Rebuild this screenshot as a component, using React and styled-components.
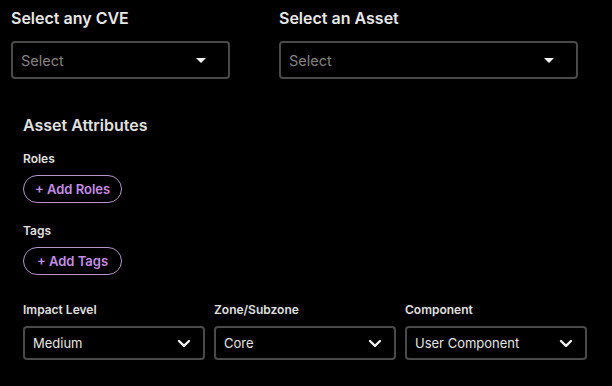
import React from 'react'
import styled, { createGlobalStyle } from 'styled-components'

const Global = createGlobalStyle`
  html, body {
    margin: 0;
    padding: 0;
    background: #000;
  }
  body {
    font-family: Inter, "Noto Sans", sans-serif;
    color: #e6e6e6;
  }
`

const Page = styled.div`
  width: 612px;
  height: 386px;
  background: #000;
  box-sizing: border-box;
  padding-top: 8px;
`

const TopRow = styled.div`
  display: grid;
  grid-template-columns: 219px 299px;
  column-gap: 49px;
  padding-left: 11px;
`

const Field = styled.div`
  display: flex;
  flex-direction: column;
`

const BigLabel = styled.div`
  font-size: 16px;
  line-height: 20px;
  font-weight: 600;
  color: #e8e8e8;
  margin-bottom: 13px;
`

const SelectBox = styled.div`
  height: 38px;
  box-sizing: border-box;
  border: 2px solid #4a4a4a;
  border-radius: 4px;
  display: flex;
  align-items: center;
  justify-content: space-between;
  padding: 0 22px 0 8px;
  font-size: 14.5px;
  color: #858585;
`

const Caret = styled.span`
  width: 0;
  height: 0;
  border-left: 5px solid transparent;
  border-right: 5px solid transparent;
  border-top: 5px solid #f2f2f2;
`

const Attributes = styled.div`
  padding: 36px 23px 0 23px;
  display: flex;
  flex-direction: column;
`

const SectionTitle = styled.div`
  font-size: 16px;
  line-height: 20px;
  font-weight: 600;
  color: #e0e0e0;
  margin-bottom: 16px;
`

const SmallLabel = styled.div`
  font-size: 12px;
  line-height: 16px;
  font-weight: 600;
  color: #e0e0e0;
  margin-bottom: 8px;
`

const PillButton = styled.button`
  width: 99px;
  height: 28px;
  box-sizing: border-box;
  border: 1px solid #b596c9;
  border-radius: 14px;
  background: transparent;
  color: #c58ee6;
  font-family: inherit;
  font-size: 13px;
  font-weight: 600;
  padding: 0;
  margin-bottom: ${p => p.$after || 0}px;
  align-self: flex-start;
`

const BottomRow = styled.div`
  display: grid;
  grid-template-columns: repeat(3, 182px);
  column-gap: 9px;
  margin-top: 27px;
`

const DropBox = styled.div`
  height: 34px;
  box-sizing: border-box;
  border: 2px solid #4a4a4a;
  border-radius: 4px;
  display: flex;
  align-items: center;
  justify-content: space-between;
  padding: 0 12px 0 8px;
  font-size: 13px;
  color: #e6e6e6;
`

const Chevron = () => (
  <svg width="14" height="9" viewBox="0 0 14 9" fill="none">
    <path d="M2 2 L7 6.8 L12 2" stroke="#f2f2f2" strokeWidth="2.4" strokeLinecap="round" strokeLinejoin="round" />
  </svg>
)

const dropdowns = [
  { label: 'Impact Level', value: 'Medium' },
  { label: 'Zone/Subzone', value: 'Core' },
  { label: 'Component', value: 'User Component' },
]

export default function App() {
  return (
    <Page>
      <Global />
      <TopRow>
        <Field>
          <BigLabel>Select any CVE</BigLabel>
          <SelectBox>
            Select
            <Caret />
          </SelectBox>
        </Field>
        <Field>
          <BigLabel>Select an Asset</BigLabel>
          <SelectBox>
            Select
            <Caret />
          </SelectBox>
        </Field>
      </TopRow>

      <Attributes>
        <SectionTitle>Asset Attributes</SectionTitle>
        <SmallLabel>Roles</SmallLabel>
        <PillButton $after={20}>+ Add Roles</PillButton>
        <SmallLabel>Tags</SmallLabel>
        <PillButton>+ Add Tags</PillButton>

        <BottomRow>
          {dropdowns.map(d => (
            <Field key={d.label}>
              <SmallLabel>{d.label}</SmallLabel>
              <DropBox>
                {d.value}
                <Chevron />
              </DropBox>
            </Field>
          ))}
        </BottomRow>
      </Attributes>
    </Page>
  )
}
